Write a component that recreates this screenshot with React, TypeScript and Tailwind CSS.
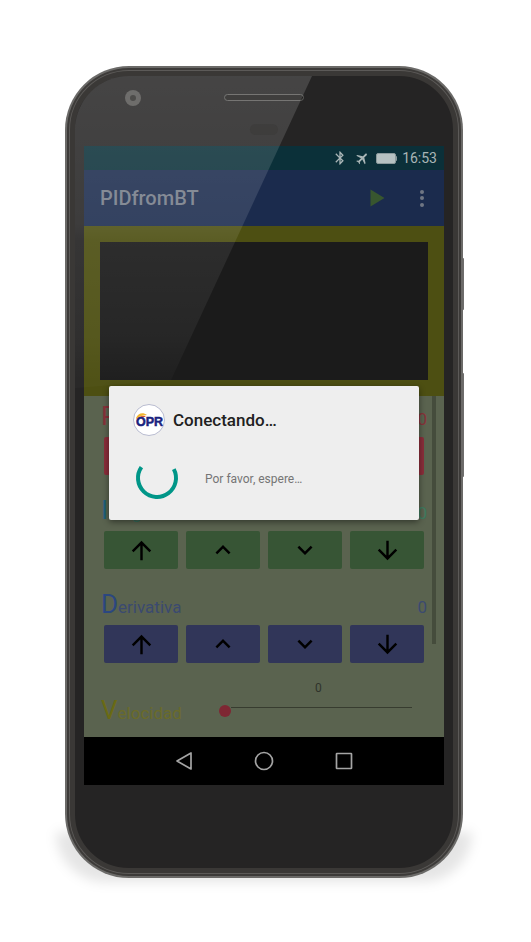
const ARROW_UP = "M4 12l1.41 1.41L11 7.83V20h2V7.83l5.58 5.59L20 12l-8-8-8 8z";
const ARROW_DOWN = "M20 12l-1.41-1.41L13 16.17V4h-2v12.17l-5.58-5.59L4 12l8 8 8-8z";
const CHEVRON_UP = "M7.41 15.41L12 10.83l4.59 4.58L18 14l-6-6-6 6z";
const CHEVRON_DOWN = "M7.41 8.59L12 13.17l4.59-4.58L18 10l-6 6-6-6z";
const BLUETOOTH =
  "M17.71 7.71L12 2h-1v7.59L6.41 5 5 6.41 10.59 12 5 17.59 6.41 19 11 14.41V22h1l5.71-5.71-4.3-4.29 4.3-4.29zM13 5.83l1.88 1.88L13 9.59V5.83zm1.88 10.46L13 18.17v-3.76l1.88 1.88z";
const AIRPLANE =
  "M21 16v-2l-8-5V3.5c0-.83-.67-1.5-1.5-1.5S10 2.67 10 3.5V9l-8 5v2l8-2.5V19l-2 1.5V22l3.5-1 3.5 1v-1.5L13 19v-5.5l8 2.5z";

function Glyph({ d, size, className }: { d: string; size: number; className?: string }) {
  return (
    <svg width={size} height={size} viewBox="0 0 24 24" fill="currentColor" className={className}>
      <path d={d} />
    </svg>
  );
}

function PidRow({
  letter,
  rest,
  letterClass,
  restClass,
  valueClass,
  buttonClass,
}: {
  letter: string;
  rest: string;
  letterClass: string;
  restClass: string;
  valueClass: string;
  buttonClass: string;
}) {
  return (
    <section className="flex h-[94px] flex-col px-[20px]">
      <div className="-mx-[3px] flex h-[41px] items-baseline justify-between pt-[2px]">
        <span className={`text-[17px] leading-[36px] ${restClass}`}>
          <span className={`text-[26px] ${letterClass}`}>{letter}</span>
          {rest}
        </span>
        <span className={`text-[17px] ${valueClass}`}>0</span>
      </div>
      <div className="flex gap-[8px]">
        {[
          { d: ARROW_UP, size: 29 },
          { d: CHEVRON_UP, size: 30 },
          { d: CHEVRON_DOWN, size: 30 },
          { d: ARROW_DOWN, size: 29 },
        ].map((icon) => (
          <button
            key={icon.d}
            className={`flex h-[38px] w-[74px] items-center justify-center rounded-[2px] text-black ${buttonClass}`}
          >
            <Glyph d={icon.d} size={icon.size} />
          </button>
        ))}
      </div>
    </section>
  );
}

function ProgressDialog() {
  return (
    <div className="absolute left-[25px] top-[240px] z-30 h-[134px] w-[310px] rounded-[2px] bg-[#eeeeee] px-[24px] pt-[18px] shadow-[0_2px_6px_rgba(0,0,0,0.45)]">
      <div className="flex h-[32px] items-center gap-[8px]">
        <div className="flex h-[32px] w-[32px] shrink-0 items-center justify-center overflow-hidden rounded-full border border-[#b9bcd0] bg-white">
          <svg width="30" height="30" viewBox="0 0 30 30">
            <path d="M2 13 C4 8 9 7 13 10 L7 11 C5 12 4 13 3 15 Z" fill="#f2b632" />
            <path d="M2.5 16 C4 12 8 10 12 11.5 L7 13 C5 14 4 15 3.5 17 Z" fill="#d8452e" />
            <text
              x="15.5"
              y="20.5"
              textAnchor="middle"
              fontFamily="'Liberation Sans', sans-serif"
              fontWeight="700"
              fontSize="12.5"
              stroke="#1a237e"
              strokeWidth="0.5"
              fill="#1a237e"
            >
              OPR
            </text>
          </svg>
        </div>
        <h2 className="text-[17px] font-medium leading-none text-[#212121]">Conectando…</h2>
      </div>
      <div className="mt-[18px] flex items-center">
        <svg width="48" height="48" viewBox="0 0 48 48" className="shrink-0">
          <path
            d="M8.4 13.1 A19 19 0 1 0 40.8 15.1"
            fill="none"
            stroke="#009688"
            strokeWidth="4"
          />
        </svg>
        <p className="ml-[24px] mt-[2px] text-[12px] text-[#757575]">Por favor, espere…</p>
      </div>
    </div>
  );
}

function Screen() {
  return (
    <div className="relative flex h-[639px] w-[360px] flex-col overflow-hidden bg-black">
      <div className="flex h-[24px] shrink-0 items-center justify-end bg-[#0b3039] pr-[7px] text-[#a9b5b6]">
        <Glyph d={BLUETOOTH} size={16} className="mr-[7px]" />
        <Glyph d={AIRPLANE} size={15} className="mr-[6px] rotate-45" />
        <div className="mr-[5px] flex items-center">
          <div className="h-[11px] w-[20px] rounded-[2px] border border-[#8b9a9c] bg-[#b6c2c2]" />
          <div className="h-[5px] w-[1.5px] rounded-r-[1px] bg-[#8b9a9c]" />
        </div>
        <span className="text-[14px] leading-none">16:53</span>
      </div>

      <header className="flex h-[56px] shrink-0 items-center bg-[#1b2b4d] pl-[16px] text-[#757c88]">
        <h1 className="text-[20px] font-medium leading-none">PIDfromBT</h1>
        <svg width="15" height="18" viewBox="0 0 15 18" className="ml-auto mr-[35px]">
          <path d="M0.5 0.5 L14.5 9 L0.5 17.5 Z" fill="#38562f" />
        </svg>
        <div className="mr-[20px] flex flex-col gap-[2.5px]">
          <i className="block h-[4px] w-[4px] rounded-full bg-[#6f7683]" />
          <i className="block h-[4px] w-[4px] rounded-full bg-[#6f7683]" />
          <i className="block h-[4px] w-[4px] rounded-full bg-[#6f7683]" />
        </div>
      </header>

      <div className="h-[170px] shrink-0 bg-[#4d4f12] p-[16px]">
        <div className="h-[138px] w-[328px] bg-[#1b1b1b]" />
      </div>

      <main className="relative h-[341px] shrink-0 bg-[#5a634f]">
        <PidRow
          letter="P"
          rest="roporcional"
          letterClass="text-[#87323a]"
          restClass="text-[#7e3a3c]"
          valueClass="text-[#87323a]"
          buttonClass="bg-[#8a2d3a]"
        />
        <PidRow
          letter="I"
          rest="ntegral"
          letterClass="text-[#1f5f7a]"
          restClass="text-[#33705f]"
          valueClass="text-[#3f7a60]"
          buttonClass="bg-[#375535]"
        />
        <PidRow
          letter="D"
          rest="erivativa"
          letterClass="text-[#2b4780]"
          restClass="text-[#3b4a70]"
          valueClass="text-[#3b4a70]"
          buttonClass="bg-[#313659]"
        />
        <div className="flex items-start pl-[17px] pt-[3px]">
          <span className="mt-[11px] w-[118px] text-[17px] leading-[36px] text-[#6a6b2a]">
            <span className="text-[26px] text-[#6a6a14]">V</span>elocidad
          </span>
          <div className="flex w-[193px] flex-col">
            <span className="ml-[96px] text-[12px] leading-[14px] text-[#2f332b]">0</span>
            <div className="mt-[10px] flex items-center">
              <i className="h-[12px] w-[12px] shrink-0 rounded-full bg-[#7e2733]" />
              <i className="-mt-[7px] h-px flex-1 bg-[#373c2f]" />
            </div>
          </div>
        </div>
        <div className="absolute right-[8px] top-0 h-[248px] w-[4px] bg-[#454c3c]" />
      </main>

      <nav className="flex h-[48px] shrink-0 items-center justify-center gap-[52px] bg-black">
        <svg width="28" height="28" viewBox="0 0 28 28" fill="none" stroke="#a4a4a4" strokeWidth="1.7">
          <path d="M21 6 V22 L7 14 Z" strokeLinejoin="round" />
        </svg>
        <svg width="28" height="28" viewBox="0 0 28 28" fill="none" stroke="#a4a4a4" strokeWidth="1.7">
          <circle cx="14" cy="14" r="8.5" />
        </svg>
        <svg width="28" height="28" viewBox="0 0 28 28" fill="none" stroke="#a4a4a4" strokeWidth="1.7">
          <rect x="6.5" y="6.5" width="15" height="15" rx="0.5" />
        </svg>
      </nav>

      <ProgressDialog />
    </div>
  );
}

export default function App() {
  return (
    <div className="h-[942px] w-[531px] overflow-hidden bg-white pl-[65px] pt-[66px] font-['Roboto',sans-serif]">
      <div className="relative h-[812px] w-[398px]">
        {/* shadow under the phone */}
        <div className="absolute bottom-[-4px] left-[-9px] right-[-9px] h-[50px] rounded-b-[70px] bg-black/10 blur-[6px]" />
        {/* side buttons */}
        <div className="absolute left-[394px] top-[192px] h-[52px] w-[5px] rounded-r-[1px] bg-[#6e6d6c]" />
        <div className="absolute left-[394px] top-[307px] h-[104px] w-[5px] rounded-r-[1px] bg-[#6e6d6c]" />

        <div className="relative h-full w-full rounded-[64px] bg-[#6b6a68] p-[2px]">
          <div className="h-full w-full rounded-[62px] bg-[#3d3b39] p-[2px]">
            <div className="h-full w-full rounded-[60px] bg-[#5c5a58] p-[1px]">
              <div className="relative flex h-full w-full flex-col items-center overflow-hidden rounded-[59px] border-[5px] border-[#3a3836] bg-[#252424] pt-[70px]">
                <div className="absolute left-[50px] top-[14px] flex h-[16px] w-[16px] items-center justify-center rounded-full bg-[#565553]">
                  <i className="h-[6px] w-[6px] rounded-full bg-[#2f2e2c]" />
                </div>
                <div className="absolute left-[149px] top-[18px] h-[7px] w-[80px] rounded-full border border-[#5f5e5c] bg-[#1f1e1d]" />
                <div className="absolute left-[175px] top-[48px] h-[11px] w-[28px] rounded-full bg-[#201f1e]" />
                <Screen />
                {/* glass reflection across the top left */}
                <div className="pointer-events-none absolute inset-0 z-20 bg-[linear-gradient(180deg,rgba(255,255,255,0.15),rgba(255,255,255,0.11)_148px,rgba(255,255,255,0.08)_165px,rgba(255,255,255,0.05)_260px,rgba(255,255,255,0.02)_302px)] [clip-path:polygon(0_0,237px_0,96px_304px,0_312px)]" />
              </div>
            </div>
          </div>
        </div>
      </div>
    </div>
  );
}
